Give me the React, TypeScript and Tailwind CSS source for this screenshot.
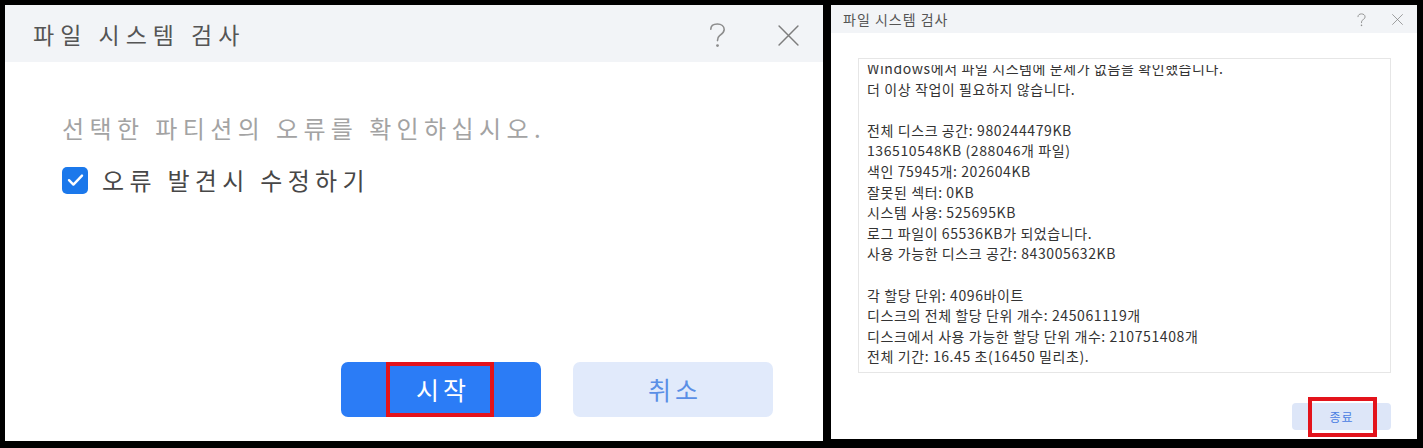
import React from "react";

const FONT = { fontFamily: '"Noto Sans CJK KR", "Noto Sans", sans-serif' };

function QIcon({ w, h, color, sw }: { w: number; h: number; color: string; sw: number }) {
  return (
    <svg width={w} height={h} viewBox="0 0 17 25" fill="none">
      <path
        d="M1.8 6.2 C1.8 2.8 4.6 1 8.4 1 C12.4 1 15.2 3.2 15.2 6.6 C15.2 9.6 12.8 11 10.8 12.4 C9.2 13.6 8.5 14.6 8.5 17.6"
        stroke={color}
        strokeWidth={sw}
        strokeLinecap="round"
      />
      <circle cx="8.5" cy="22.6" r={sw * 0.9} fill={color} />
    </svg>
  );
}

function XIcon({ s, color, sw }: { s: number; color: string; sw: number }) {
  return (
    <svg width={s} height={s} viewBox="0 0 20 20" fill="none">
      <path d="M1 1 L19 19 M19 1 L1 19" stroke={color} strokeWidth={sw} strokeLinecap="round" />
    </svg>
  );
}

const lines: string[] = [
  "Windows에서 파일 시스템에 문제가 없음을 확인했습니다.",
  "더 이상 작업이 필요하지 않습니다.",
  "",
  "전체 디스크 공간: 980244479KB",
  "136510548KB (288046개 파일)",
  "색인 75945개: 202604KB",
  "잘못된 섹터: 0KB",
  "시스템 사용: 525695KB",
  "로그 파일이 65536KB가 되었습니다.",
  "사용 가능한 디스크 공간: 843005632KB",
  "",
  "각 할당 단위: 4096바이트",
  "디스크의 전체 할당 단위 개수: 245061119개",
  "디스크에서 사용 가능한 할당 단위 개수: 210751408개",
  "전체 기간: 16.45 초(16450 밀리초).",
];

export default function App() {
  return (
    <div className="w-[1423px] h-[448px] bg-black flex items-start gap-[8px] pl-[5px] pt-[5px] overflow-hidden" style={FONT}>
      {/* Left dialog */}
      <div className="w-[818px] h-[436px] bg-white flex flex-col">
        <div className="h-[57px] bg-[#f2f4f7] flex items-center pl-[28px] pr-[24px]">
          <div className="text-[23px] tracking-[6px] text-[#555555] flex-1 pt-[1px]">파일 시스템 검사</div>
          <div className="flex items-center gap-[52px] pt-[3px]">
            <QIcon w={17} h={25} color="#8c8c8c" sw={1.6} />
            <XIcon s={21} color="#7d7d7d" sw={1.4} />
          </div>
        </div>
        <div className="pl-[57px] pt-[50px] flex flex-col">
          <div className="text-[24px] tracking-[5.4px] text-[#a3a3a3] leading-[32px]">선택한 파티션의 오류를 확인하십시오.</div>
          <div className="flex items-center mt-[20px]">
            <div className="w-[26px] h-[27px] rounded-[5px] bg-[#1b78eb] flex items-center justify-center">
              <svg width="17" height="14" viewBox="0 0 17 14" fill="none">
                <path d="M2 7.2 L6.4 11.6 L15 2.6" stroke="white" strokeWidth="2.4" strokeLinecap="round" strokeLinejoin="round" />
              </svg>
            </div>
            <div className="ml-[14px] text-[24px] tracking-[5.3px] text-[#474747] leading-[32px]">오류 발견시 수정하기</div>
          </div>
        </div>
        <div className="flex-1" />
        <div className="flex justify-end gap-[32px] pr-[50px] pb-[24px]">
          <div className="relative w-[200px] h-[55px] rounded-[7px] bg-[#2b7cf6] flex items-center justify-center">
            <span className="text-[25px] tracking-[4px] text-white pl-[4px]">시작</span>
            <div className="absolute left-[45px] top-0 w-[108px] h-[55px] border-[4px] border-[#e3131b]" />
          </div>
          <div className="w-[200px] h-[55px] rounded-[7px] bg-[#e1eafb] flex items-center justify-center">
            <span className="text-[25px] tracking-[4px] text-[#5a8fe6] pl-[4px]">취소</span>
          </div>
        </div>
      </div>

      {/* Right dialog */}
      <div className="w-[586px] h-[434px] bg-white flex flex-col">
        <div className="h-[28px] bg-[#f2f4f7] flex items-center pl-[12px] pr-[14px]">
          <div className="text-[14px] tracking-[1px] text-[#555555] flex-1">파일 시스템 검사</div>
          <div className="flex items-center gap-[26px] pt-[1px]">
            <QIcon w={9} h={14} color="#8c8c8c" sw={1.7} />
            <XIcon s={11} color="#7d7d7d" sw={1.3} />
          </div>
        </div>
        <div className="mt-[25px] ml-[27px] w-[533px] h-[315px] border border-[#e6e6e6] pt-[6px] pl-[8px]">
          <div className="h-[307px] overflow-hidden">
            <div className="mt-[-7px] text-[14px] tracking-[0.6px] leading-[20.6px] text-[#333333]">
              {lines.map((l, i) => (
                <div key={i} className="h-[20.6px] whitespace-nowrap">{l}</div>
              ))}
            </div>
          </div>
        </div>
        <div className="flex justify-end pr-[26px] mt-[30px]">
          <div className="relative w-[99px] h-[27px] rounded-[4px] bg-[#dde6f8] flex items-center justify-center">
            <span className="text-[12px] tracking-[1px] text-[#4a80e2]">종료</span>
            <div className="absolute left-[16px] top-[-6px] w-[69px] h-[40px] border-[4px] border-[#e3131b]" />
          </div>
        </div>
      </div>
    </div>
  );
}
